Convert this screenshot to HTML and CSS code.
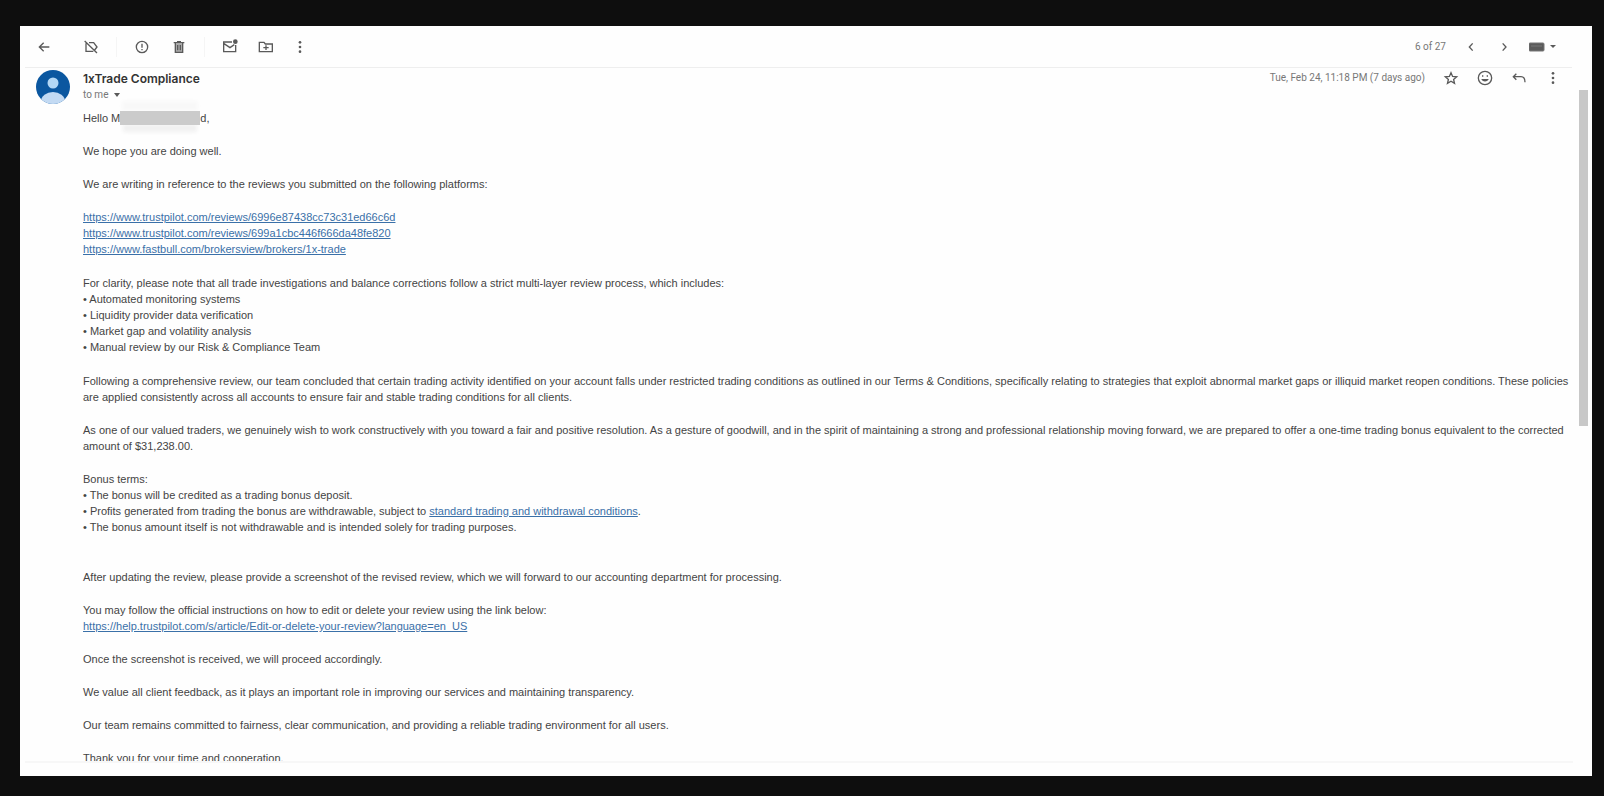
FILE: index.html
```html
<!DOCTYPE html>
<html lang="en">
<head>
<meta charset="utf-8">
<meta name="viewport" content="width=device-width, initial-scale=1">
<title>1xTrade Compliance</title>
<link rel="stylesheet" href="styles.css">
</head>
<body>
<main class="card">
  <header class="toolbar">
    <div class="tools">
      <button class="icon back" aria-label="Back"><svg viewBox="0 0 24 24"><path d="M20 12H5M11.500 5.500 5 12l6.500 6.500"/></svg></button>
      <button class="icon unlabel" aria-label="Remove label"><svg viewBox="0 0 24 24"><path d="M9 5.500h7L21 12l-3.500 4.500M15.500 18.500H4.500v-12M2.500 3l18.500 18"/></svg></button>
      <span class="divider"></span>
      <button class="icon spam" aria-label="Report spam"><svg viewBox="0 0 24 24"><circle cx="12" cy="12" r="8.500"/><path d="M12 7v6M12 15v2"/></svg></button>
      <button class="icon trash" aria-label="Delete"><svg viewBox="0 0 24 24"><path class="tint" d="M6.500 6.500h11V20h-11z"/><path d="M4 5.500h16M9 4h6M6.500 6.500V20h11V6.500M10 9v8M14 9v8"/></svg></button>
      <span class="divider"></span>
      <button class="icon unread" aria-label="Mark as unread"><svg viewBox="0 0 24 24"><path d="M15 4.500H2.500v14.500h18V9M3 7l9 6 6.500-4.500"/><circle class="solid" cx="20" cy="4" r="3.500"/></svg></button>
      <button class="icon move" aria-label="Move to"><svg viewBox="0 0 24 24"><path d="M2 19v-14h7l2 2.500h10.500V19zM8 13h8M12 9.500v7"/></svg></button>
      <button class="icon more" aria-label="More"><svg viewBox="0 0 24 24"><g class="solid"><circle cx="12" cy="5" r="2"/><circle cx="12" cy="12" r="2"/><circle cx="12" cy="19" r="2"/></g></svg></button>
    </div>
    <div class="pager">
      <span class="count">6 of 27</span>
      <button class="icon" aria-label="Newer"><svg viewBox="0 0 24 24"><path d="M14.500 6.500 9.500 12l5 5.500"/></svg></button>
      <button class="icon" aria-label="Older"><svg viewBox="0 0 24 24"><path d="M10 6.500l5 5.500-5 5.500"/></svg></button>
      <button class="input-tool" aria-label="Input tools"><svg class="keyboard" viewBox="0 0 16 10"><rect y="1" width="15" height="8" rx="1"/><path d="M2 4h11"/></svg><svg class="caret" viewBox="0 0 8 4"><path d="M1 0h6L4 3z"/></svg></button>
    </div>
  </header>
  <div class="pane">
    <article class="mail">
      <svg class="avatar" viewBox="0 0 34 34" role="img" aria-label="Sender"><defs><clipPath id="disc"><circle cx="17" cy="17" r="17"/></clipPath></defs><g clip-path="url(#disc)"><rect width="34" height="34" fill="#0b57a0"/><circle cx="17" cy="13" r="5.500" fill="#b3d7f5"/><ellipse cx="17" cy="31" rx="12" ry="9" fill="#c3daf3"/></g></svg>
      <div class="content">
        <div class="meta">
          <div class="sender">
            <h1 class="name">1xTrade Compliance</h1>
            <button class="recipient">to me <svg class="caret" viewBox="0 0 8 4"><path d="M1 0h6L4 4z"/></svg></button>
          </div>
          <div class="actions">
            <time class="date">Tue, Feb 24, 11:18 PM (7 days ago)</time>
            <button class="icon" aria-label="Star"><svg viewBox="0 0 24 24"><path d="M12 4l2.400 5.600 6.100.5-4.600 4 1.400 6-5.300-3.200L6.700 20.100l1.400-6-4.600-4 6.100-.5z"/></svg></button>
            <button class="icon" aria-label="React"><svg viewBox="0 0 24 24"><circle cx="12" cy="12" r="10"/><path class="solid" d="M6.500 13.500h11c-1 5-10 5-11 0z"/><path d="M8.500 8v2M15.500 8v2"/></svg></button>
            <button class="icon" aria-label="Reply"><svg viewBox="0 0 24 24"><path d="M8 5.500 3.500 10 8 14.500M4 10h11c4 0 6 3 6 8.500"/></svg></button>
            <button class="icon" aria-label="More"><svg viewBox="0 0 24 24"><g class="solid"><circle cx="12" cy="5" r="2"/><circle cx="12" cy="12" r="2"/><circle cx="12" cy="19" r="2"/></g></svg></button>
          </div>
        </div>
        <div class="message">
          <p class="greeting">Hello M<span class="redacted"></span>d,</p>
          <p>We hope you are doing well.</p>
          <p>We are writing in reference to the reviews you submitted on the following platforms:</p>
          <p class="group"><a href="#">https://www.trustpilot.com/reviews/6996e87438cc73c31ed66c6d</a><br><a href="#">https://www.trustpilot.com/reviews/699a1cbc446f666da48fe820</a><br><a href="#">https://www.fastbull.com/brokersview/brokers/1x-trade</a></p>
          <p class="group">For clarity, please note that all trade investigations and balance corrections follow a strict multi-layer review process, which includes:<br>• Automated monitoring systems<br>• Liquidity provider data verification<br>• Market gap and volatility analysis<br>• Manual review by our Risk &amp; Compliance Team</p>
          <p>Following a comprehensive review, our team concluded that certain trading activity identified on your account falls under restricted trading conditions as outlined in our Terms &amp; Conditions, specifically relating to strategies that exploit abnormal market gaps or illiquid market reopen conditions. These policies are applied consistently across all accounts to ensure fair and stable trading conditions for all clients.</p>
          <p>As one of our valued traders, we genuinely wish to work constructively with you toward a fair and positive resolution. As a gesture of goodwill, and in the spirit of maintaining a strong and professional relationship moving forward, we are prepared to offer a one-time trading bonus equivalent to the corrected amount of $31,238.00.</p>
          <p class="terms">Bonus terms:<br>• The bonus will be credited as a trading bonus deposit.<br>• Profits generated from trading the bonus are withdrawable, subject to <a href="#">standard trading and withdrawal conditions</a>.<br>• The bonus amount itself is not withdrawable and is intended solely for trading purposes.</p>
          <p>After updating the review, please provide a screenshot of the revised review, which we will forward to our accounting department for processing.</p>
          <p>You may follow the official instructions on how to edit or delete your review using the link below:<br><a href="#">https://help.trustpilot.com/s/article/Edit-or-delete-your-review?language=en_US</a></p>
          <p>Once the screenshot is received, we will proceed accordingly.</p>
          <p>We value all client feedback, as it plays an important role in improving our services and maintaining transparency.</p>
          <p>Our team remains committed to fairness, clear communication, and providing a reliable trading environment for all users.</p>
          <p>Thank you for your time and cooperation.</p>
        </div>
      </div>
    </article>
    <div class="scrollbar"></div>
  </div>
</main>
</body>
</html>
```
FILE: styles.css
```css
* { box-sizing: border-box; }
body {
  margin: 0;
  height: 100vh;
  padding: 26px 12px 20px 20px;
  background: #0e0e0e;
  color: #444;
  font: 11px/16px "Liberation Sans", Arial, sans-serif;
}
button { border: 0; padding: 0; background: none; color: inherit; font: inherit; }
h1, p { margin: 0; }
a { color: #3a70a8; }
.card {
  display: flex;
  flex-direction: column;
  height: 100%;
  padding: 0 4px 13px 5px;
  background: #fefefe;
}
.toolbar {
  display: flex;
  justify-content: space-between;
  align-items: center;
  height: 42px;
  margin-right: 16px;
  padding: 0 15px 0 11px;
  border-bottom: 1px solid #eee;
}
.tools, .pager, .actions { display: flex; align-items: center; }
.icon { display: flex; width: 16px; height: 16px; }
.icon svg {
  width: 16px;
  height: 16px;
  fill: none;
  stroke: #5a5a5a;
  stroke-width: 2;
}
.icon .solid { fill: #5a5a5a; stroke: none; }
.icon .tint { fill: #aaa; stroke: none; }
.unlabel { margin-left: 31px; }
.divider { width: 1px; height: 20px; margin: 0 17px; background: #f5f5f5; }
.trash { margin-left: 21px; }
.move { margin-left: 20px; }
.more { margin-left: 18px; }
.pager { gap: 17px; }
.input-tool { display: flex; align-items: center; gap: 4px; }
.keyboard { width: 16px; height: 10px; fill: #5a5a5a; stroke: #777; }
.caret { width: 8px; height: 4px; fill: #5a5a5a; }
.pane { display: flex; flex: 1; min-height: 0; }
.mail {
  display: flex;
  flex: 1;
  align-items: flex-start;
  min-width: 0;
  overflow: hidden;
  padding: 2px 0 0 11px;
  border-bottom: 2px solid #f7f7f7;
}
.avatar { flex: none; width: 34px; height: 34px; }
.content { flex: 1; min-width: 0; padding-left: 13px; }
.meta { display: flex; justify-content: space-between; align-items: flex-start; }
.name { font: 600 12px/17px Inter, sans-serif; color: #333; }
.count, .date, .recipient { font: 10px/16px Roboto, sans-serif; color: #777; }
.recipient { display: flex; align-items: center; gap: 5px; }
.actions { gap: 18px; padding-right: 12px; }
.message { padding-top: 7px; }
.message p { margin-bottom: 17px; }
.message .group { margin-bottom: 18px; }
.message .terms { margin-bottom: 34px; }
.greeting { display: flex; align-items: center; }
.redacted {
  width: 80px;
  height: 14px;
  background: #cbcbcb;
  box-shadow: 0 -12px 4px -2px #f8f8f8, 0 10px 4px -3px #f0f0f0;
}
.scrollbar { width: 9px; height: 336px; margin: 22px 0 0 6px; background: #c8c8c8; }
```
